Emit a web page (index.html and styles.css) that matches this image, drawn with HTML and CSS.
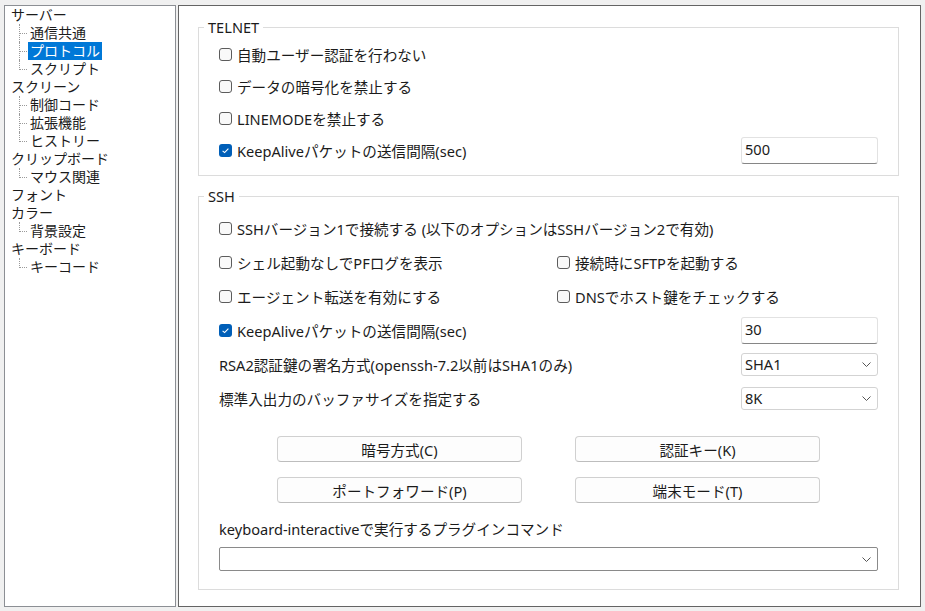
FILE: index.html
```html
<!DOCTYPE html>
<html lang="ja">
<head>
<meta charset="utf-8">
<title>設定</title>
<link rel="stylesheet" href="styles.css">
</head>
<body>
<div class="window">
  <nav class="tree">
    <ul class="roots">
      <li><span class="node">サーバー</span>
        <ul class="children">
          <li><span class="node">通信共通</span></li>
          <li><span class="node selected">プロトコル</span></li>
          <li><span class="node">スクリプト</span></li>
        </ul>
      </li>
      <li><span class="node">スクリーン</span>
        <ul class="children">
          <li><span class="node">制御コード</span></li>
          <li><span class="node">拡張機能</span></li>
          <li><span class="node">ヒストリー</span></li>
        </ul>
      </li>
      <li><span class="node">クリップボード</span>
        <ul class="children">
          <li><span class="node">マウス関連</span></li>
        </ul>
      </li>
      <li><span class="node">フォント</span></li>
      <li><span class="node">カラー</span>
        <ul class="children">
          <li><span class="node">背景設定</span></li>
        </ul>
      </li>
      <li><span class="node">キーボード</span>
        <ul class="children">
          <li><span class="node">キーコード</span></li>
        </ul>
      </li>
    </ul>
  </nav>

  <main class="panel">
    <fieldset class="group">
      <legend>TELNET</legend>
      <div class="group-body telnet">
        <div class="row"><label class="check"><span class="box"></span>自動ユーザー認証を行わない</label></div>
        <div class="row"><label class="check"><span class="box"></span>データの暗号化を禁止する</label></div>
        <div class="row"><label class="check"><span class="box"></span>LINEMODEを禁止する</label></div>
        <div class="row"><label class="check"><span class="box on"><svg viewBox="0 0 13 13" width="13" height="13"><path d="M3.6 6.8 L5.6 8.6 L9.4 4.6" fill="none" stroke="#fff" stroke-width="1.1"/></svg></span>KeepAliveパケットの送信間隔(sec)</label><div class="textbox">500</div></div>
      </div>
    </fieldset>

    <fieldset class="group ssh">
      <legend>SSH</legend>
      <div class="group-body sshbody">
        <div class="row"><label class="check"><span class="box"></span>SSHバージョン1で接続する (以下のオプションはSSHバージョン2で有効)</label></div>
        <div class="row two">
          <label class="check"><span class="box"></span>シェル起動なしでPFログを表示</label>
          <label class="check"><span class="box"></span>接続時にSFTPを起動する</label>
        </div>
        <div class="row two">
          <label class="check"><span class="box"></span>エージェント転送を有効にする</label>
          <label class="check"><span class="box"></span>DNSでホスト鍵をチェックする</label>
        </div>
        <div class="row"><label class="check"><span class="box on"><svg viewBox="0 0 13 13" width="13" height="13"><path d="M3.6 6.8 L5.6 8.6 L9.4 4.6" fill="none" stroke="#fff" stroke-width="1.1"/></svg></span>KeepAliveパケットの送信間隔(sec)</label><div class="textbox">30</div></div>
        <div class="row"><span class="label">RSA2認証鍵の署名方式(openssh-7.2以前はSHA1のみ)</span><div class="select"><span>SHA1</span><svg class="chev" viewBox="0 0 9 5" width="9" height="5"><path d="M0.5 0.5 L4.5 4.5 L8.5 0.5" fill="none" stroke="#555" stroke-width="1"/></svg></div></div>
        <div class="row"><span class="label">標準入出力のバッファサイズを指定する</span><div class="select"><span>8K</span><svg class="chev" viewBox="0 0 9 5" width="9" height="5"><path d="M0.5 0.5 L4.5 4.5 L8.5 0.5" fill="none" stroke="#555" stroke-width="1"/></svg></div></div>

        <div class="buttons">
          <button class="btn">暗号方式(C)</button>
          <button class="btn">認証キー(K)</button>
          <button class="btn">ポートフォワード(P)</button>
          <button class="btn">端末モード(T)</button>
        </div>

        <div class="cmd-label">keyboard-interactiveで実行するプラグインコマンド</div>
        <div class="combo"><span></span><svg class="chev" viewBox="0 0 9 5" width="9" height="5"><path d="M0.5 0.5 L4.5 4.5 L8.5 0.5" fill="none" stroke="#555" stroke-width="1"/></svg></div>
      </div>
    </fieldset>
  </main>
</div>
</body>
</html>
```

FILE: styles.css
```css
html, body {
  margin: 0;
  padding: 0;
}

body {
  background: #f0f0f0;
  font-family: "Noto Sans", "Noto Sans CJK JP", sans-serif;
  font-size: 14px;
  color: #1b1b1b;
}

.window {
  display: flex;
  gap: 2px;
  height: 611px;
  box-sizing: border-box;
  padding: 5px 4px 4px 4px;
}

/* ---------- tree ---------- */
.tree {
  width: 172px;
  flex: none;
  box-sizing: border-box;
  border: 1px solid #8c8f94;
  background: #fff;
  padding: 0 0 0 4px;
  line-height: 18px;
}

.tree ul {
  list-style: none;
  margin: 0;
  padding: 0;
}

.node {
  display: block;
  width: fit-content;
  height: 18px;
  line-height: 18px;
  padding: 0 2px;
  white-space: nowrap;
}

.node.selected {
  background: #0078d7;
  color: #fff;
}

.tree .children {
  padding-left: 19px;
}

.children > li {
  position: relative;
}

.children > li::before {
  content: "";
  position: absolute;
  left: -9px;
  top: 0;
  width: 7px;
  height: 9px;
  border-left: 1px dotted #9a9a9a;
  border-bottom: 1px dotted #9a9a9a;
}

.children > li:not(:last-child)::after {
  content: "";
  position: absolute;
  left: -9px;
  top: 0;
  bottom: 0;
  border-left: 1px dotted #9a9a9a;
}

/* ---------- panel ---------- */
.panel {
  flex: 1;
  box-sizing: border-box;
  border: 1px solid #646464;
  background: #fff;
  padding: 12px 21px 0 19px;
  font-size: 14.6px;
}

.group {
  margin: 0;
  padding: 0;
  border: 1px solid #dcdcdc;
  min-inline-size: 0;
}

.group legend {
  margin-left: 5px;
  padding: 0 4px;
  line-height: 19px;
}

.ssh {
  margin-top: 11px;
}

.group-body {
  padding: 0 20px 9px 20px;
}

.telnet {
  padding-top: 1px;
}

.telnet .row {
  height: 32px;
}

.sshbody {
  padding-top: 5px;
  padding-bottom: 18px;
}

.sshbody .row {
  height: 34px;
}

.row {
  display: flex;
  align-items: center;
  justify-content: space-between;
}

.row.two {
  display: grid;
  grid-template-columns: 338px 1fr;
  align-items: center;
}

.check {
  display: flex;
  align-items: center;
  gap: 5px;
  white-space: nowrap;
}

.box {
  display: block;
  width: 13px;
  height: 13px;
  box-sizing: border-box;
  border: 1px solid #5c5c5c;
  border-radius: 3px;
  background: #f9f9f9;
  flex: none;
}

.box.on {
  border: none;
  background: #005fb8;
}

.box svg {
  display: block;
}

.label {
  white-space: nowrap;
}

.textbox {
  width: 137px;
  height: 27px;
  box-sizing: border-box;
  border: 1px solid #e2e2e2;
  border-bottom-color: #868686;
  border-radius: 3px;
  padding: 2px 3px 0 3px;
  line-height: 18px;
}

.select {
  width: 137px;
  height: 23px;
  box-sizing: border-box;
  border: 1px solid #d3d3d3;
  border-radius: 3px;
  display: flex;
  align-items: center;
  justify-content: space-between;
  padding: 0 6px 0 3px;
}

.chev {
  display: block;
}

.buttons {
  margin-top: 21px;
  display: grid;
  grid-template-columns: 245px 245px;
  column-gap: 53px;
  row-gap: 15px;
  justify-content: center;
}

.btn {
  height: 26px;
  box-sizing: border-box;
  border: 1px solid #d0d0d0;
  border-bottom-color: #bdbdbd;
  border-radius: 4px;
  background: #fdfdfd;
  font-family: inherit;
  font-size: 14.6px;
  color: #1b1b1b;
  padding: 0;
}

.cmd-label {
  margin-top: 16px;
  line-height: 20px;
}

.combo {
  margin-top: 8px;
  height: 24px;
  box-sizing: border-box;
  border: 1px solid #8a8a8a;
  border-radius: 2px;
  display: flex;
  align-items: center;
  justify-content: space-between;
  padding: 0 6px 0 3px;
}
```
